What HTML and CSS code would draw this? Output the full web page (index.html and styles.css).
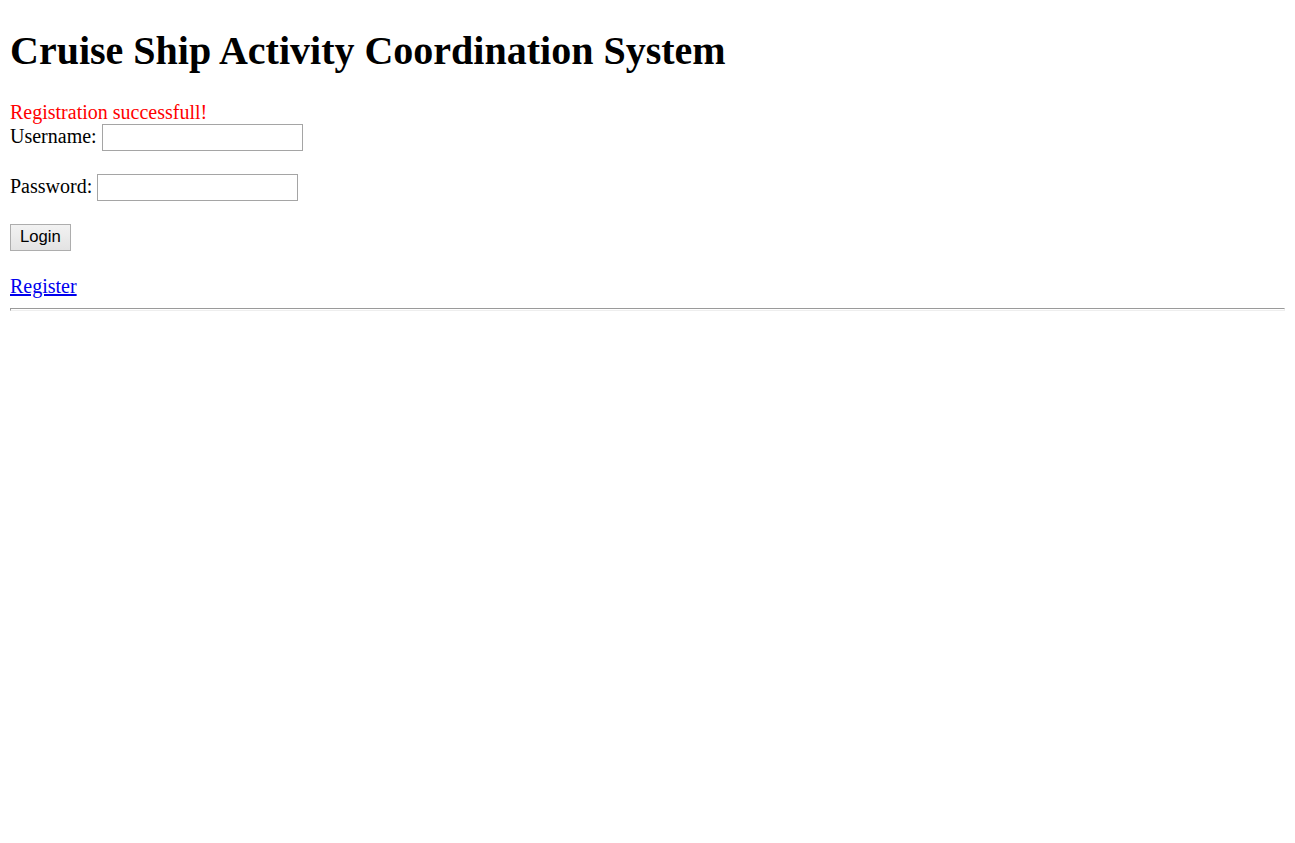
FILE: index.html
```html
<!DOCTYPE html>
<html>
<head>
<meta charset="utf-8">
<title>Cruise Ship Activity Coordination System</title>
<link rel="stylesheet" href="styles.css">
</head>
<body>
<h1 class="title">Cruise Ship Activity Coordination System</h1>
<div class="message">Registration successfull!</div>
<form class="login-form">
<label class="field-label" for="username">Username:</label> <input class="text-input" type="text" id="username" name="username"><br><br>
<label class="field-label" for="password">Password:</label> <input class="text-input" type="password" id="password" name="password"><br><br>
<button class="btn" type="submit">Login</button>
</form>
<a class="link" href="#">Register</a>
<hr class="rule">
</body>
</html>
```
FILE: styles.css
```css
html {
  background: #fff;
}
body {
  margin: 10px;
  font-family: "Liberation Serif", "Times New Roman", serif;
  font-size: 20px;
  color: #000;
}
.title {
  font-size: 40px;
  font-weight: bold;
  margin: 16.8px 0 26.8px 0;
}
.message {
  color: #ff0000;
}
.login-form {
  margin: 0 0 24px 0;
}
.text-input {
  box-sizing: border-box;
  width: 201px;
  height: 27px;
  padding: 1px 2.5px;
  border: 1px solid #a5a5a5;
  border-radius: 0;
  font-family: "Liberation Sans", Arial, sans-serif;
  font-size: 16.67px;
  vertical-align: baseline;
  background: #fff;
}
.btn {
  box-sizing: border-box;
  height: 27px;
  padding: 0 9px;
  border: 1px solid #adadad;
  border-radius: 0;
  background: linear-gradient(#f2f2f2, #e3e3e3);
  font-family: "Liberation Sans", Arial, sans-serif;
  font-size: 16.67px;
  color: #000;
}
.link {
  color: #0000ee;
  text-decoration: underline;
}
.rule {
  margin: 10px 0;
  height: 1px;
  border-style: solid;
  border-width: 1px;
  border-color: #9a9a9a #eeeeee #eeeeee #9a9a9a;
}
```
